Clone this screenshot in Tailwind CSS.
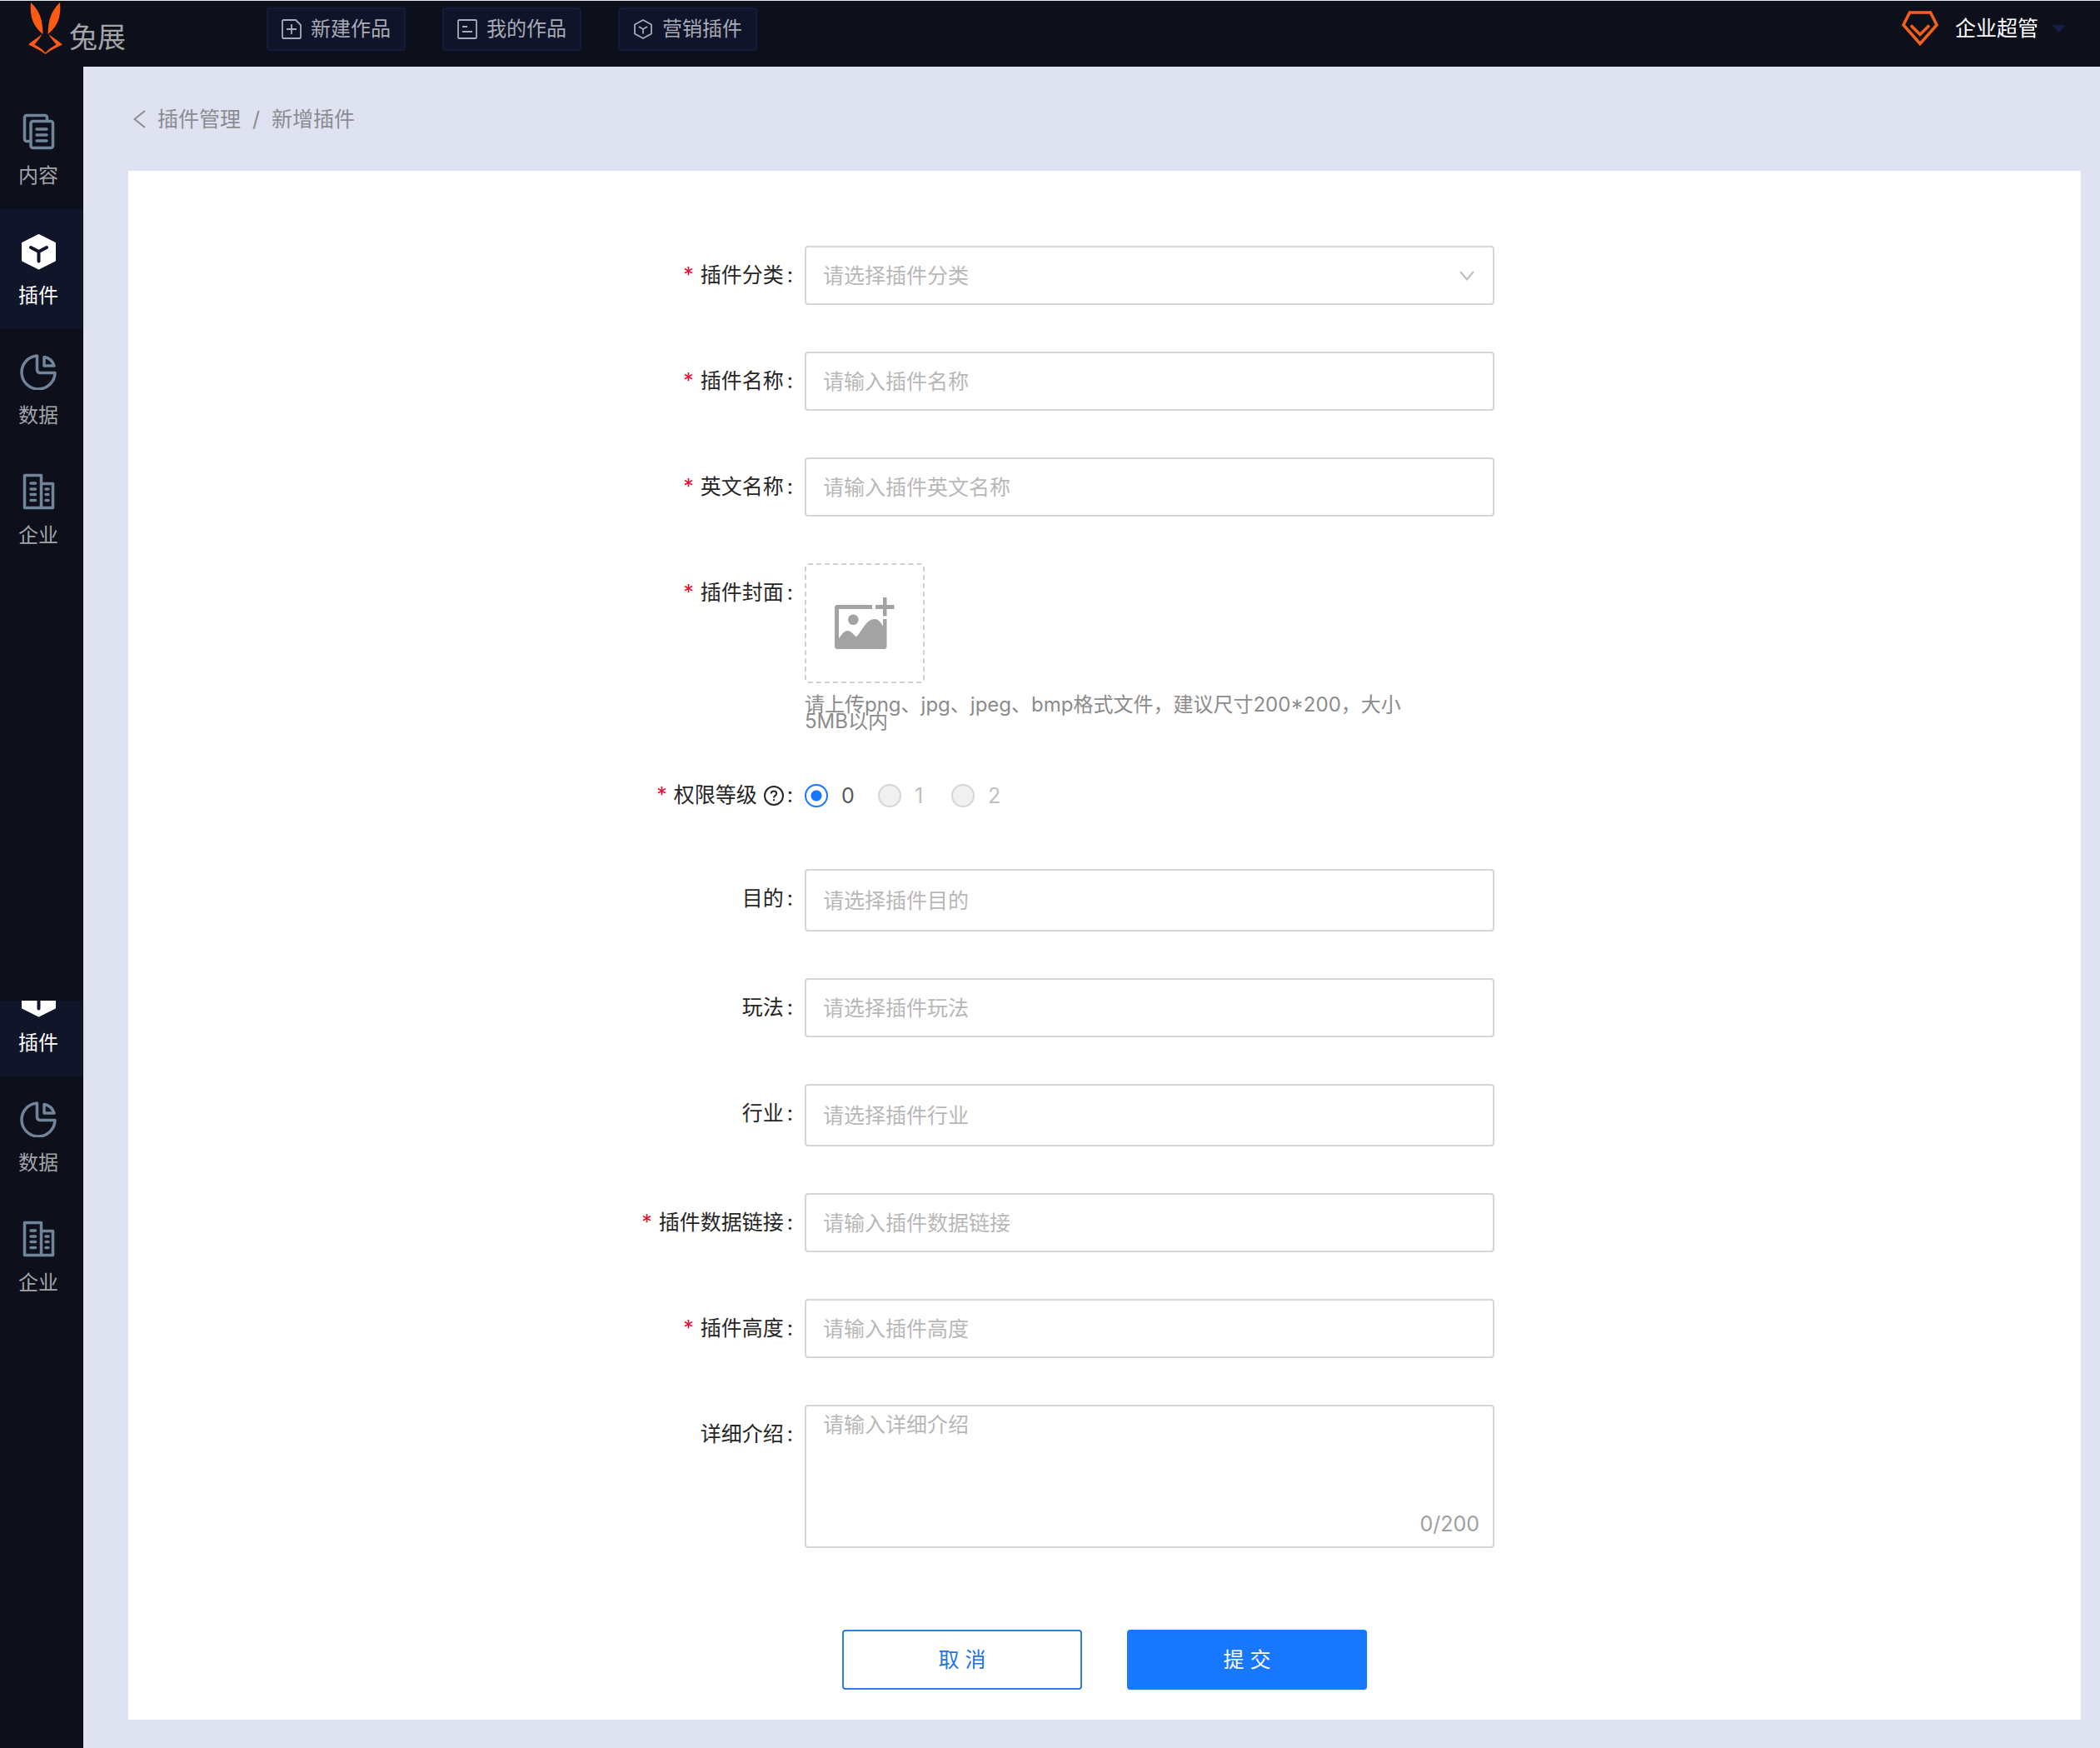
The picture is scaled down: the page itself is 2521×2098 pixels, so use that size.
<!DOCTYPE html>
<html lang="zh-CN">
<head>
    <meta charset="UTF-8">
    <meta name="viewport" content="width=device-width, initial-scale=1.0">
    <title>新增插件 - 兔展</title>
    <script src="https://cdn.jsdelivr.net/npm/@tailwindcss/browser@4"></script>
</head>
<body class="min-h-screen flex flex-col bg-[#dfe2f1] font-['Inter','Noto_Sans_CJK_SC',sans-serif] text-[25px] leading-9 text-[#262626]">

    <!-- Shared icon shapes -->
    <svg class="hidden" aria-hidden="true">
        <symbol id="icon-content" viewBox="0 0 44 44">
            <g fill="none" stroke="currentColor" stroke-width="3.5" stroke-linecap="round" stroke-linejoin="round">
                <path d="M11 33.500H8A2.500 2.500 0 0 1 5.500 31V5A2.500 2.500 0 0 1 8 2.500H30A2.500 2.500 0 0 1 32.500 5V9"/>
                <rect x="13" y="9.500" width="26.500" height="32" rx="2.500"/>
                <path d="M20 19H32M20 26H32M20 33H32"/>
            </g>
        </symbol>
        <symbol id="icon-plugin" viewBox="0 0 44 44">
            <path d="M22.500 2.500L41.500 12V32.500L22.500 42L3.500 32.500V12Z" fill="currentColor" stroke="currentColor" stroke-width="3" stroke-linejoin="round"/>
            <path d="M13 17L22.500 22L32 17M22.500 22V33.500" fill="none" stroke="#11152a" stroke-width="4" stroke-linecap="round"/>
        </symbol>
        <symbol id="icon-data" viewBox="0 0 44 44">
            <g fill="none" stroke="currentColor" stroke-width="3.5" stroke-linejoin="round">
                <path d="M20.500 3A20 20 0 1 0 42 23.500H24.500Q20.500 23.500 20.500 19.500Z"/>
                <path d="M29 4.500Q38 6 41 15H29Z"/>
            </g>
        </symbol>
        <symbol id="icon-company" viewBox="0 0 44 44">
            <g fill="none" stroke="currentColor" stroke-width="3.5" stroke-linejoin="round">
                <path d="M5.500 2.500H25.500V41.500H5.500ZM25.500 12.500H39.500V41.500H25.500"/>
                <path d="M13 12H18.500M13 19H18.500M13 25.500H18.500M13 32.500H18.500M31 19H34M31 25.500H34M31 32.500H34" stroke-linecap="round"/>
            </g>
        </symbol>
    </svg>

    <!-- Top bar -->
    <header class="flex h-20 shrink-0 items-start justify-between border-t border-[#e4e6ee] bg-[#0d0f1b] pl-[34px] pr-[41px]">
        <div class="flex">
            <a href="#" class="flex w-[286px] items-start pt-0.5" aria-label="兔展">
                <svg class="h-[62px] w-[41px]" viewBox="0 0 41 62" fill="#ff5a12">
                    <path d="M3 0C11 8 17 16 17.500 38C9 31 1 21 3 0Z"/>
                    <path d="M38 0C30 8 24 16 23.500 38C32 31 40 21 38 0Z"/>
                    <path d="M16.500 38C12 42 6 45 0 50.500C7 54 14 57 20.500 62C27 57 34 54 41 50.500C35 45 29 42 24.500 38C27 43 30 46 33.500 50.500C29 53 24 56 20.500 60.500C17 56 12 53 7.500 50.500C11 46 14 43 16.500 38Z"/>
                </svg>
                <span class="pl-2 pt-6 text-[34px] text-[#a3a4a8]">兔展</span>
            </a>
            <nav class="flex gap-11 pt-2 text-2xl text-[#a9abb5]">
                <button class="flex h-[52px] items-center gap-[11px] rounded-sm border-2 border-[#151b3b] bg-[#10142a] px-4">
                    <svg class="size-6" viewBox="0 0 24 24" fill="none" stroke="currentColor" stroke-width="1.8" stroke-linejoin="round"><path d="M2 1H17L23 7V22L22 23H2L1 22V2ZM12 6V18M6 12H18"/></svg>
                    新建作品
                </button>
                <button class="flex h-[52px] items-center gap-[11px] rounded-sm border-2 border-[#151b3b] bg-[#10142a] px-4">
                    <svg class="size-6" viewBox="0 0 24 24" fill="none" stroke="currentColor" stroke-width="1.8" stroke-linejoin="round"><path d="M2 1H22L23 2V22L22 23H2L1 22V2ZM6 9H12M6 15H18"/></svg>
                    我的作品
                </button>
                <button class="flex h-[52px] items-center gap-[11px] rounded-sm border-2 border-[#151b3b] bg-[#10142a] px-4">
                    <svg class="size-6" viewBox="0 0 24 24" fill="none" stroke="currentColor" stroke-width="1.8" stroke-linejoin="round"><path d="M12 1L22 6.500V17.500L12 23L2 17.500V6.500ZM7 9L12 12L17 9M12 12V17.500"/></svg>
                    营销插件
                </button>
            </nav>
        </div>
        <button class="flex h-[66px] items-center text-white">
            <svg class="mr-5 h-[42px] w-11" viewBox="0 0 44 42" fill="none" stroke="#f4601a" stroke-width="3.6">
                <path d="M9.500 2H34.500L42 17L22 39.500L2 17Z"/>
                <path d="M11 17.500L22 28.500L33 17.500"/>
            </svg>
            企业超管
            <svg class="ml-4 h-[9px] w-[17px]" viewBox="0 0 17 9" fill="#151d48"><path d="M0 0H17L8.500 9Z"/></svg>
        </button>
    </header>

    <div class="flex grow">
        <!-- Sidebar -->
        <aside class="w-[100px] shrink-0 bg-[#0d0f1b] text-2xl leading-8 text-[#a3a4a8]">
            <nav class="h-[1121px] overflow-hidden pt-[27px]">
                <a href="#" class="flex h-36 flex-col items-center gap-[15px] pr-2 pt-[29px]">
                    <svg class="size-11 text-[#71859a]"><use href="#icon-content"/></svg>
                    内容
                </a>
                <a href="#" class="flex h-36 flex-col items-center gap-[15px] bg-[#11152a] pr-2 pt-[29px] text-white">
                    <svg class="size-11"><use href="#icon-plugin"/></svg>
                    插件
                </a>
                <a href="#" class="flex h-36 flex-col items-center gap-[15px] pr-2 pt-[29px]">
                    <svg class="size-11 text-[#71859a]"><use href="#icon-data"/></svg>
                    数据
                </a>
                <a href="#" class="flex h-36 flex-col items-center gap-[15px] pr-2 pt-[29px]">
                    <svg class="size-11 text-[#71859a]"><use href="#icon-company"/></svg>
                    企业
                </a>
            </nav>
            <nav class="overflow-hidden">
                <a href="#" class="-mt-[53px] flex h-36 flex-col items-center gap-[15px] bg-[#11152a] pr-2 pt-[29px] text-white">
                    <svg class="size-11"><use href="#icon-plugin"/></svg>
                    插件
                </a>
                <a href="#" class="flex h-36 flex-col items-center gap-[15px] pr-2 pt-[29px]">
                    <svg class="size-11 text-[#71859a]"><use href="#icon-data"/></svg>
                    数据
                </a>
                <a href="#" class="flex h-36 flex-col items-center gap-[15px] pr-2 pt-[29px]">
                    <svg class="size-11 text-[#71859a]"><use href="#icon-company"/></svg>
                    企业
                </a>
            </nav>
        </aside>

        <main class="grow pb-[34px] pl-[54px] pr-[23px]">
            <!-- Breadcrumb -->
            <nav class="flex h-[125px] items-center pl-1.5 text-[#8b8c90]">
                <a href="#" class="flex items-center gap-[14px]">
                    <svg class="h-[22px] w-[15px]" viewBox="0 0 15 22" fill="none" stroke="currentColor" stroke-width="2"><path d="M14 1L1.500 11L14 21"/></svg>
                    插件管理
                </a>
                <span class="px-[14px]">/</span>
                <span>新增插件</span>
            </nav>

            <!-- Plugin form -->
            <form class="bg-white pb-9 pt-[90px]">
                <div class="mb-14 grid grid-cols-[812fr_828fr_704fr]">
                    <label for="category" class="pr-[14px] text-right leading-[71px]"><span class="mr-2 text-[#e60f2f]">*</span>插件分类<span class="pl-1">:</span></label>
                    <div class="relative">
                        <select id="category" class="h-[71px] w-full appearance-none rounded border-2 border-[#d6d6d6] bg-white px-5 text-[#b8b8b8]">
                            <option>请选择插件分类</option>
                        </select>
                        <svg class="pointer-events-none absolute right-6 top-[30px] h-3 w-[18px]" viewBox="0 0 18 12" fill="none" stroke="#bdbdbd" stroke-width="2"><path d="M1 1L9 10.500L17 1"/></svg>
                    </div>
                </div>
                <div class="mb-14 grid grid-cols-[812fr_828fr_704fr]">
                    <label for="name" class="pr-[14px] text-right leading-[71px]"><span class="mr-2 text-[#e60f2f]">*</span>插件名称<span class="pl-1">:</span></label>
                    <input id="name" type="text" placeholder="请输入插件名称" class="h-[71px] w-full rounded border-2 border-[#d6d6d6] px-5 placeholder:text-[#b8b8b8]">
                </div>
                <div class="mb-14 grid grid-cols-[812fr_828fr_704fr]">
                    <label for="en-name" class="pr-[14px] text-right leading-[71px]"><span class="mr-2 text-[#e60f2f]">*</span>英文名称<span class="pl-1">:</span></label>
                    <input id="en-name" type="text" placeholder="请输入插件英文名称" class="h-[71px] w-full rounded border-2 border-[#d6d6d6] px-5 placeholder:text-[#b8b8b8]">
                </div>
                <div class="mb-[43px] grid grid-cols-[812fr_828fr_704fr]">
                    <label for="cover" class="pr-[14px] text-right leading-[71px]"><span class="mr-2 text-[#e60f2f]">*</span>插件封面<span class="pl-1">:</span></label>
                    <div>
                        <label for="cover" class="flex size-36 items-center justify-center rounded border-2 border-dashed border-[#d0d0d0]">
                            <svg class="h-[62px] w-[72px]" viewBox="0 0 72 62" fill="#a3a3a3">
                                <path d="M2 9H45V14H5V49.500C9 43 12 40 15.500 40C19 40 22 44 26 47.500C33 40 38 26 48 26C53 26 56 31 58 34.500V26H62.500V60L60.500 62H2L0 60V11Z"/>
                                <circle cx="22.300" cy="26.700" r="6.300"/>
                                <path d="M58 0H62.500V9H71.500V14H62.500V22.500H58V14H49V9H58Z"/>
                            </svg>
                            <input id="cover" type="file" class="sr-only">
                        </label>
                        <p class="max-w-[730px] pt-4 text-2xl leading-5 text-[#8c8c8c]">请上传png、jpg、jpeg、bmp格式文件，建议尺寸200*200，大小5MB以内</p>
                    </div>
                </div>
                <fieldset class="mb-[53px] grid grid-cols-[812fr_828fr_704fr]">
                    <div class="flex items-center justify-end pr-[14px] leading-[71px]">
                        <span class="mr-2 text-[#e60f2f]">*</span>权限等级
                        <svg class="ml-2 size-6" viewBox="0 0 24 24" fill="none" stroke="currentColor" stroke-width="2"><circle cx="12" cy="12" r="11"/><path d="M8.800 9.500C8.800 5.500 15.200 5.500 15.200 9.500C15.200 12 12 11.800 12 14.500M12 16.300V18.300"/></svg>
                        <span class="pl-1">:</span>
                    </div>
                    <div class="flex items-center">
                        <label class="flex w-[88px] items-center gap-4 text-[#595959]">
                            <input type="radio" name="level" checked class="size-7 appearance-none rounded-full border-2 border-[#1777ff] bg-white bg-[radial-gradient(circle,#1777ff_6px,transparent_7px)]">0
                        </label>
                        <label class="flex w-[88px] items-center gap-4 text-[#bfbfbf]">
                            <input type="radio" name="level" disabled class="size-7 appearance-none rounded-full border-2 border-[#d6d6d6] bg-[#f0f0f0]">1
                        </label>
                        <label class="flex w-[88px] items-center gap-4 text-[#bfbfbf]">
                            <input type="radio" name="level" disabled class="size-7 appearance-none rounded-full border-2 border-[#d6d6d6] bg-[#f0f0f0]">2
                        </label>
                    </div>
                </fieldset>
                <div class="mb-14 grid grid-cols-[812fr_828fr_704fr]">
                    <label for="purpose" class="pr-[14px] text-right leading-[71px]">目的<span class="pl-1">:</span></label>
                    <input id="purpose" type="text" placeholder="请选择插件目的" class="h-[75px] w-full rounded border-2 border-[#d6d6d6] px-5 placeholder:text-[#b8b8b8]">
                </div>
                <div class="mb-14 grid grid-cols-[812fr_828fr_704fr]">
                    <label for="play" class="pr-[14px] text-right leading-[71px]">玩法<span class="pl-1">:</span></label>
                    <input id="play" type="text" placeholder="请选择插件玩法" class="h-[71px] w-full rounded border-2 border-[#d6d6d6] px-5 placeholder:text-[#b8b8b8]">
                </div>
                <div class="mb-14 grid grid-cols-[812fr_828fr_704fr]">
                    <label for="industry" class="pr-[14px] text-right leading-[71px]">行业<span class="pl-1">:</span></label>
                    <input id="industry" type="text" placeholder="请选择插件行业" class="h-[75px] w-full rounded border-2 border-[#d6d6d6] px-5 placeholder:text-[#b8b8b8]">
                </div>
                <div class="mb-14 grid grid-cols-[812fr_828fr_704fr]">
                    <label for="data-link" class="pr-[14px] text-right leading-[71px]"><span class="mr-2 text-[#e60f2f]">*</span>插件数据链接<span class="pl-1">:</span></label>
                    <input id="data-link" type="text" placeholder="请输入插件数据链接" class="h-[71px] w-full rounded border-2 border-[#d6d6d6] px-5 placeholder:text-[#b8b8b8]">
                </div>
                <div class="mb-14 grid grid-cols-[812fr_828fr_704fr]">
                    <label for="height" class="pr-[14px] text-right leading-[71px]"><span class="mr-2 text-[#e60f2f]">*</span>插件高度<span class="pl-1">:</span></label>
                    <input id="height" type="text" placeholder="请输入插件高度" class="h-[71px] w-full rounded border-2 border-[#d6d6d6] px-5 placeholder:text-[#b8b8b8]">
                </div>
                <div class="grid grid-cols-[812fr_828fr_704fr]">
                    <label for="intro" class="pr-[14px] text-right leading-[71px]">详细介绍<span class="pl-1">:</span></label>
                    <div class="relative">
                        <textarea id="intro" maxlength="200" placeholder="请输入详细介绍" class="block h-[172px] w-full resize-none rounded border-2 border-[#d6d6d6] px-5 py-1 placeholder:text-[#b8b8b8]"></textarea>
                        <span class="absolute bottom-[11px] right-[18px] text-[#a0a0a0]">0/200</span>
                    </div>
                </div>

                <!-- Form actions -->
                <div class="mt-[98px] flex justify-center gap-[54px]">
                    <button type="button" class="h-[72px] w-72 rounded border-2 border-[#2f7be8] bg-white text-[#2474e5]">取 消</button>
                    <button type="submit" class="h-[72px] w-72 rounded bg-[#1777ff] text-white shadow-sm">提 交</button>
                </div>
            </form>
        </main>
    </div>

</body>
</html>
